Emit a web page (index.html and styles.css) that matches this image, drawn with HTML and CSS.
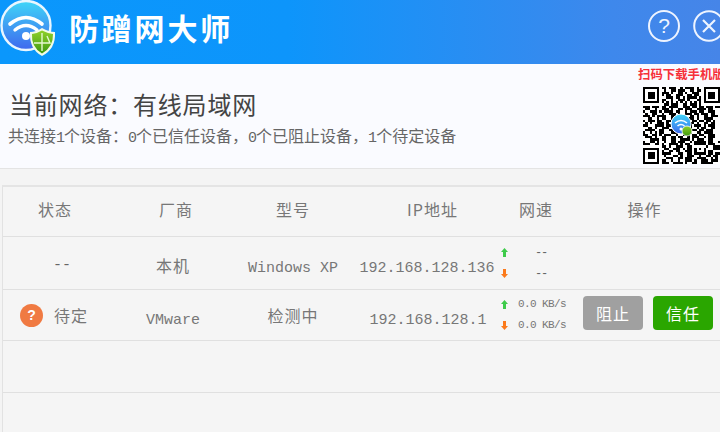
FILE: index.html
```html
<!DOCTYPE html>
<html lang="zh">
<head>
<meta charset="utf-8">
<title>防蹭网大师</title>
<link rel="stylesheet" href="styles.css">
</head>
<body>
<div class="app">
  <header class="topbar">
    <svg class="logo" viewBox="0 0 58 58" width="58" height="58" aria-hidden="true">
      <defs>
        <linearGradient id="disc" x1="0" y1="0" x2="0" y2="1">
          <stop offset="0" stop-color="#3fd6f8"/>
          <stop offset="1" stop-color="#3f68ee"/>
        </linearGradient>
        <linearGradient id="shield" x1="0" y1="0" x2="0" y2="1">
          <stop offset="0" stop-color="#8fd02a"/>
          <stop offset="1" stop-color="#3f9a10"/>
        </linearGradient>
      </defs>
      <circle cx="26" cy="25.5" r="24.5" fill="url(#disc)" stroke="#e8f6ff" stroke-width="2.4"/>
      <path d="M10 24 Q26 11 42 24" fill="none" stroke="#fff" stroke-width="3.6" stroke-linecap="round"/>
      <path d="M15 30 Q26 21 37 30" fill="none" stroke="#fff" stroke-width="3.4" stroke-linecap="round"/>
      <circle cx="26" cy="36" r="4" fill="#fff"/>
      <path d="M42 28 Q49 32 55 32 Q56 49 42 56 Q29 49 30 32 Q36 32 42 28Z" fill="#f2fbe8"/>
      <path d="M42 30.500 Q48 33.500 53 34 Q53.500 47 42 53.500 Q31 47 32 34 Q37 33.500 42 30.500Z" fill="url(#shield)"/>
      <path d="M42 33 V51 M34 43 H50 L47 36" fill="none" stroke="#e6f7cf" stroke-width="1.400"/>
    </svg>
    <h1 class="brand">防蹭网大师</h1>
    <div class="win-btns">
      <span class="win-btn">?</span>
      <svg class="win-close" viewBox="0 0 32 32" width="32" height="32" aria-hidden="true">
        <circle cx="16" cy="16" r="14.800" fill="none" stroke="#eef4ff" stroke-width="2"/>
        <path d="M10 10 L22 22 M22 10 L10 22" stroke="#eef4ff" stroke-width="2.200"/>
      </svg>
    </div>
  </header>

  <section class="info">
    <div class="info-text">
      <h2 class="net-name">当前网络：有线局域网</h2>
      <p class="net-sum">共连接<span class="n">1</span>个设备：<span class="n">0</span>个已信任设备，<span class="n">0</span>个已阻止设备，<span class="n">1</span>个待定设备</p>
    </div>
    <div class="qr-box">
      <div class="qr-cap">扫码下载手机版</div>
      <svg class="qr" viewBox="0 0 33 33" width="77" height="77" shape-rendering="crispEdges" aria-hidden="true">
        <rect width="33" height="33" fill="#fff"/>
        <path fill="#000" fill-rule="evenodd" d="M0 0h7v7h-7zM1 1v5h5v-5zM2 2h3v3h-3zM26 0h7v7h-7zM27 1v5h5v-5zM28 2h3v3h-3zM0 26h7v7h-7zM1 27v5h5v-5zM2 28h3v3h-3z"/>
        <path fill="none" stroke="#000" stroke-width="1" d="M8 .5h2m1 0h3m2 0h1m1 0h4m1 0h1M9 1.500h1m2 0h2m1 0h3m2 0h2m1 0h2M8 2.500h3m1 0h1m2 0h2m1 0h1m2 0h3M8 3.500h1m1 0h2m2 0h3m2 0h2m1 0h2M10 4.500h3m1 0h2m1 0h1m1 0h4m1 0h1M8 5.500h2m2 0h1m2 0h3m1 0h1m3 0h2M8 6.500h1m1 0h1m1 0h1m1 0h1m1 0h1m1 0h1m1 0h1m1 0h1m1 0h1M9 7.500h2m1 0h3m2 0h2m1 0h3m1 0h1M0 8.500h3m1 0h3m1 0h2m1 0h4m2 0h3m1 0h2m1 0h2m1 0h3m1 0h2M1 9.500h2m2 0h1m2 0h3m1 0h1m2 0h2m1 0h3m2 0h4m1 0h2M0 10.500h1m2 0h3m1 0h1m1 0h4m1 0h2m2 0h1m1 0h3m1 0h2m2 0h3M1 11.500h1m2 0h2m2 0h1m2 0h3m1 0h1m2 0h3m1 0h2m1 0h3m1 0h2M0 12.500h3m1 0h1m1 0h4m2 0h2m1 0h3m2 0h2m1 0h1m2 0h2m1 0h3M2 13.500h2m2 0h1m1 0h2m2 0h3m2 0h1m1 0h3m1 0h1m2 0h4M0 14.500h1m1 0h3m1 0h2m2 0h2m1 0h2m1 0h3m2 0h2m1 0h2m1 0h2m1 0h1M1 15.500h1m1 0h1m2 0h3m1 0h1m2 0h1m1 0h1m3 0h3m1 0h1m2 0h2m1 0h2M0 16.500h2m3 0h4m1 0h2m2 0h3m2 0h2m1 0h3m1 0h1m1 0h3M2 17.500h2m1 0h1m2 0h3m2 0h1m2 0h3m1 0h1m2 0h1m1 0h2m2 0h2M1 18.500h4m2 0h2m2 0h2m1 0h1m1 0h3m2 0h2m1 0h2m1 0h3M0 19.500h1m2 0h1m1 0h1m1 0h2m3 0h3m2 0h1m1 0h2m2 0h2m1 0h4M0 20.500h2m2 0h2m1 0h1m1 0h3m2 0h1m2 0h3m1 0h2m1 0h2m2 0h3M1 21.500h3m1 0h1m2 0h2m2 0h2m1 0h2m2 0h1m1 0h3m2 0h1m1 0h3M3 22.500h4m1 0h2m2 0h2m2 0h4m1 0h1m1 0h3m2 0h2M0 23.500h1m2 0h2m1 0h1m2 0h1m2 0h2m1 0h3m2 0h1m1 0h5m1 0h2m2 0h1M0 24.500h3m2 0h2m1 0h1m2 0h4m1 0h1m1 0h2m2 0h5m1 0h3M8 25.500h2m1 0h1m2 0h3m2 0h2m2 0h1m3 0h1m2 0h3M9 26.500h2m2 0h3m1 0h1m1 0h2m1 0h5m3 0h3M8 27.500h1m2 0h2m1 0h2m2 0h3m1 0h5m1 0h2M8 28.500h4m3 0h2m2 0h2m1 0h5m1 0h2m1 0h2M9 29.500h1m3 0h2m1 0h1m2 0h3m2 0h1m2 0h2m1 0h2M10 30.500h3m2 0h2m1 0h3m2 0h4m2 0h1m1 0h1M8 31.500h2m2 0h1m2 0h1m2 0h3m1 0h1m2 0h3m1 0h3M8 32.500h3m2 0h4m1 0h1m2 0h2m2 0h5"/>
        <path fill="#fff" d="M23 25h3v3h-3z"/>
        <path fill="#000" d="M24 26h1v1h-1z"/>
      </svg>
      <svg class="qr-mark" viewBox="0 0 24 24" width="24" height="24" aria-hidden="true">
        <circle cx="11" cy="11" r="10" fill="url(#disc)" stroke="#fff" stroke-width="1"/>
        <path d="M5 10 Q11 5 17 10 M7.500 13 Q11 10 14.500 13" fill="none" stroke="#fff" stroke-width="1.600"/>
        <circle cx="11" cy="16" r="1.500" fill="#fff"/>
        <circle cx="17" cy="18" r="5" fill="url(#shield)" stroke="#fff" stroke-width="0.800"/>
      </svg>
    </div>
  </section>

  <section class="devices">
    <div class="row row-head">
      <div>状态</div>
      <div class="vendor-head">厂商</div>
      <div>型号</div>
      <div class="ip-head">IP地址</div>
      <div class="speed-head">网速</div>
      <div class="op-head">操作</div>
    </div>

    <div class="row row-self">
      <div class="status-dash">--</div>
      <div class="self-name">本机</div>
      <div class="lat">Windows XP</div>
      <div class="ip lat">192.168.128.136</div>
      <div class="speed">
        <div class="sp-line"><svg class="arr" viewBox="0 0 7 9" width="7" height="9"><path d="M3.500 0L7 4H5V9H2V4H0Z" fill="#3ecb4a"/></svg><span class="sp-val sp-dash">--</span></div>
        <div class="sp-line"><svg class="arr" viewBox="0 0 7 9" width="7" height="9"><path d="M3.500 9L7 5H5V0H2V5H0Z" fill="#fb7a1c"/></svg><span class="sp-val sp-dash">--</span></div>
      </div>
      <div></div>
    </div>

    <div class="row row-dev">
      <div class="status"><span class="q">?</span><span>待定</span></div>
      <div class="lat vendor">VMware</div>
      <div>检测中</div>
      <div class="ip ip-short lat">192.168.128.1</div>
      <div class="speed">
        <div class="sp-line"><svg class="arr" viewBox="0 0 7 9" width="7" height="9"><path d="M3.500 0L7 4H5V9H2V4H0Z" fill="#3ecb4a"/></svg><span class="sp-val">0.0 KB/s</span></div>
        <div class="sp-line"><svg class="arr" viewBox="0 0 7 9" width="7" height="9"><path d="M3.500 9L7 5H5V0H2V5H0Z" fill="#fb7a1c"/></svg><span class="sp-val">0.0 KB/s</span></div>
      </div>
      <div class="ops"><button class="btn btn-block">阻止</button><button class="btn btn-trust">信任</button></div>
    </div>

    <div class="row row-empty"></div>
    <div class="row row-empty"></div>
  </section>
</div>
</body>
</html>
```

FILE: styles.css
```css
* { box-sizing: border-box; }
html, body { margin: 0; padding: 0; }
body {
  width: 720px;
  height: 432px;
  overflow: hidden;
  background: #f4f4f4;
  font-family: "Noto Sans CJK SC", sans-serif;
  color: #666;
}
.app { width: 720px; height: 432px; overflow: hidden; display: flex; flex-direction: column; }

.topbar {
  height: 64px;
  flex: none;
  display: flex;
  align-items: flex-start;
  background: linear-gradient(90deg, #0a97fc 0%, #0d95fb 40%, #3e88ec 85%, #4685e8 100%);
  position: relative;
}
.logo { flex: none; display: block; }
.brand {
  margin: 5px 0 0 11px;
  font-size: 30px;
  line-height: 44px;
  letter-spacing: 2.800px;
  font-weight: 700;
  color: #fff;
}
.win-btns {
  margin-left: auto;
  display: flex;
  gap: 13px;
  padding-top: 10px;
  margin-right: -5px;
}
.win-btn {
  width: 32px;
  height: 32px;
  border: 2px solid #eef4ff;
  border-radius: 50%;
  color: #eef4ff;
  font-family: "Liberation Sans", sans-serif;
  font-size: 21px;
  line-height: 28px;
  text-align: center;
}
.win-close { display: block; }

.info {
  height: 105px;
  flex: none;
  display: flex;
  justify-content: space-between;
  background: #fafbff;
  border-bottom: 1px solid #e4e4e4;
  overflow: hidden;
}
.info-text { padding: 23px 0 0 8px; }
.net-name {
  margin: 0 0 0 1px;
  font-size: 24px;
  line-height: 34px;
  font-weight: 400;
  letter-spacing: 0.800px;
  color: #444;
}
.net-sum {
  margin: 3px 0 0;
  font-size: 16px;
  line-height: 22px;
  color: #666;
}
.n { font-family: "Liberation Mono", monospace; font-size: 15px; letter-spacing: -1px; }

.qr-box { width: 82px; flex: none; position: relative; white-space: nowrap; }
.qr-cap {
  font-size: 12.400px;
  line-height: 18px;
  font-weight: 700;
  color: #f6303a;
  margin-top: 1px;
}
.qr { display: block; margin: 4px 0 0 5px; }
.qr-mark { position: absolute; left: 32px; top: 49px; }

.devices {
  flex: 1;
  margin: 16px 0 0 2px;
  border-left: 1px solid #e2e2e2;
  border-top: 2px solid #e4e4e4;
  background: #f5f5f5;
}
.row {
  display: grid;
  grid-template-columns: 104px 136px 100px 156px 82px 139px;
  align-items: center;
  border-bottom: 1px solid #e0e0e0;
  text-align: center;
  font-size: 16px;
  letter-spacing: 1px;
  color: #777;
}
.row-head { height: 50px; padding-bottom: 5px; }
.row-self { height: 53px; }
.row-dev { height: 51px; }
.row-empty { height: 52px; }
.row-empty:last-child { border-bottom: 0; }
.lat { font-family: "Liberation Mono", monospace; font-size: 15px; letter-spacing: 0; padding-top: 10px; }
.ip-head { padding-left: 23px; }
.vendor-head { padding-left: 2px; }
.speed-head { padding-right: 8px; }
.op-head { padding-right: 12px; }
.self-name { padding: 3px 4px 0 0; }
.status-dash { padding: 4px 0 0 14px; font-family: "Liberation Mono", monospace; font-size: 15px; letter-spacing: 0; color: #666; }
.vendor { padding-right: 4px; }
.ip { padding-left: 12px; white-space: nowrap; }
.ip-short { padding-left: 14px; }

.status { display: flex; align-items: center; gap: 11px; padding-left: 17px; }
.q {
  width: 23px;
  height: 23px;
  border-radius: 50%;
  background: #f07a42;
  color: #fff;
  font-family: "Liberation Sans", sans-serif;
  font-weight: 700;
  font-size: 14px;
  line-height: 23px;
  letter-spacing: 0;
}

.speed { display: flex; flex-direction: column; gap: 5px; letter-spacing: 0; }
.sp-line { display: flex; align-items: center; height: 16px; padding-left: 2px; }
.arr { flex: none; display: block; }
.sp-val {
  margin-left: 10px;
  padding-bottom: 2px;
  font-family: "Liberation Mono", monospace;
  font-size: 11px;
  letter-spacing: -0.600px;
  color: #777;
  white-space: pre;
}
.sp-dash { margin-left: 27px; padding-bottom: 0; font-size: 12px; letter-spacing: -1.200px; color: #666; }

.ops { display: flex; gap: 10px; padding: 0 0 4px 2px; }
.btn {
  width: 60px;
  height: 34px;
  border: 0;
  border-radius: 4px;
  padding: 0;
  color: #fff;
  font-family: "Noto Sans CJK SC", sans-serif;
  font-size: 16px;
  letter-spacing: 1px;
}
.btn-block { background: #a0a0a0; }
.btn-trust { background: #2aa600; }
```
